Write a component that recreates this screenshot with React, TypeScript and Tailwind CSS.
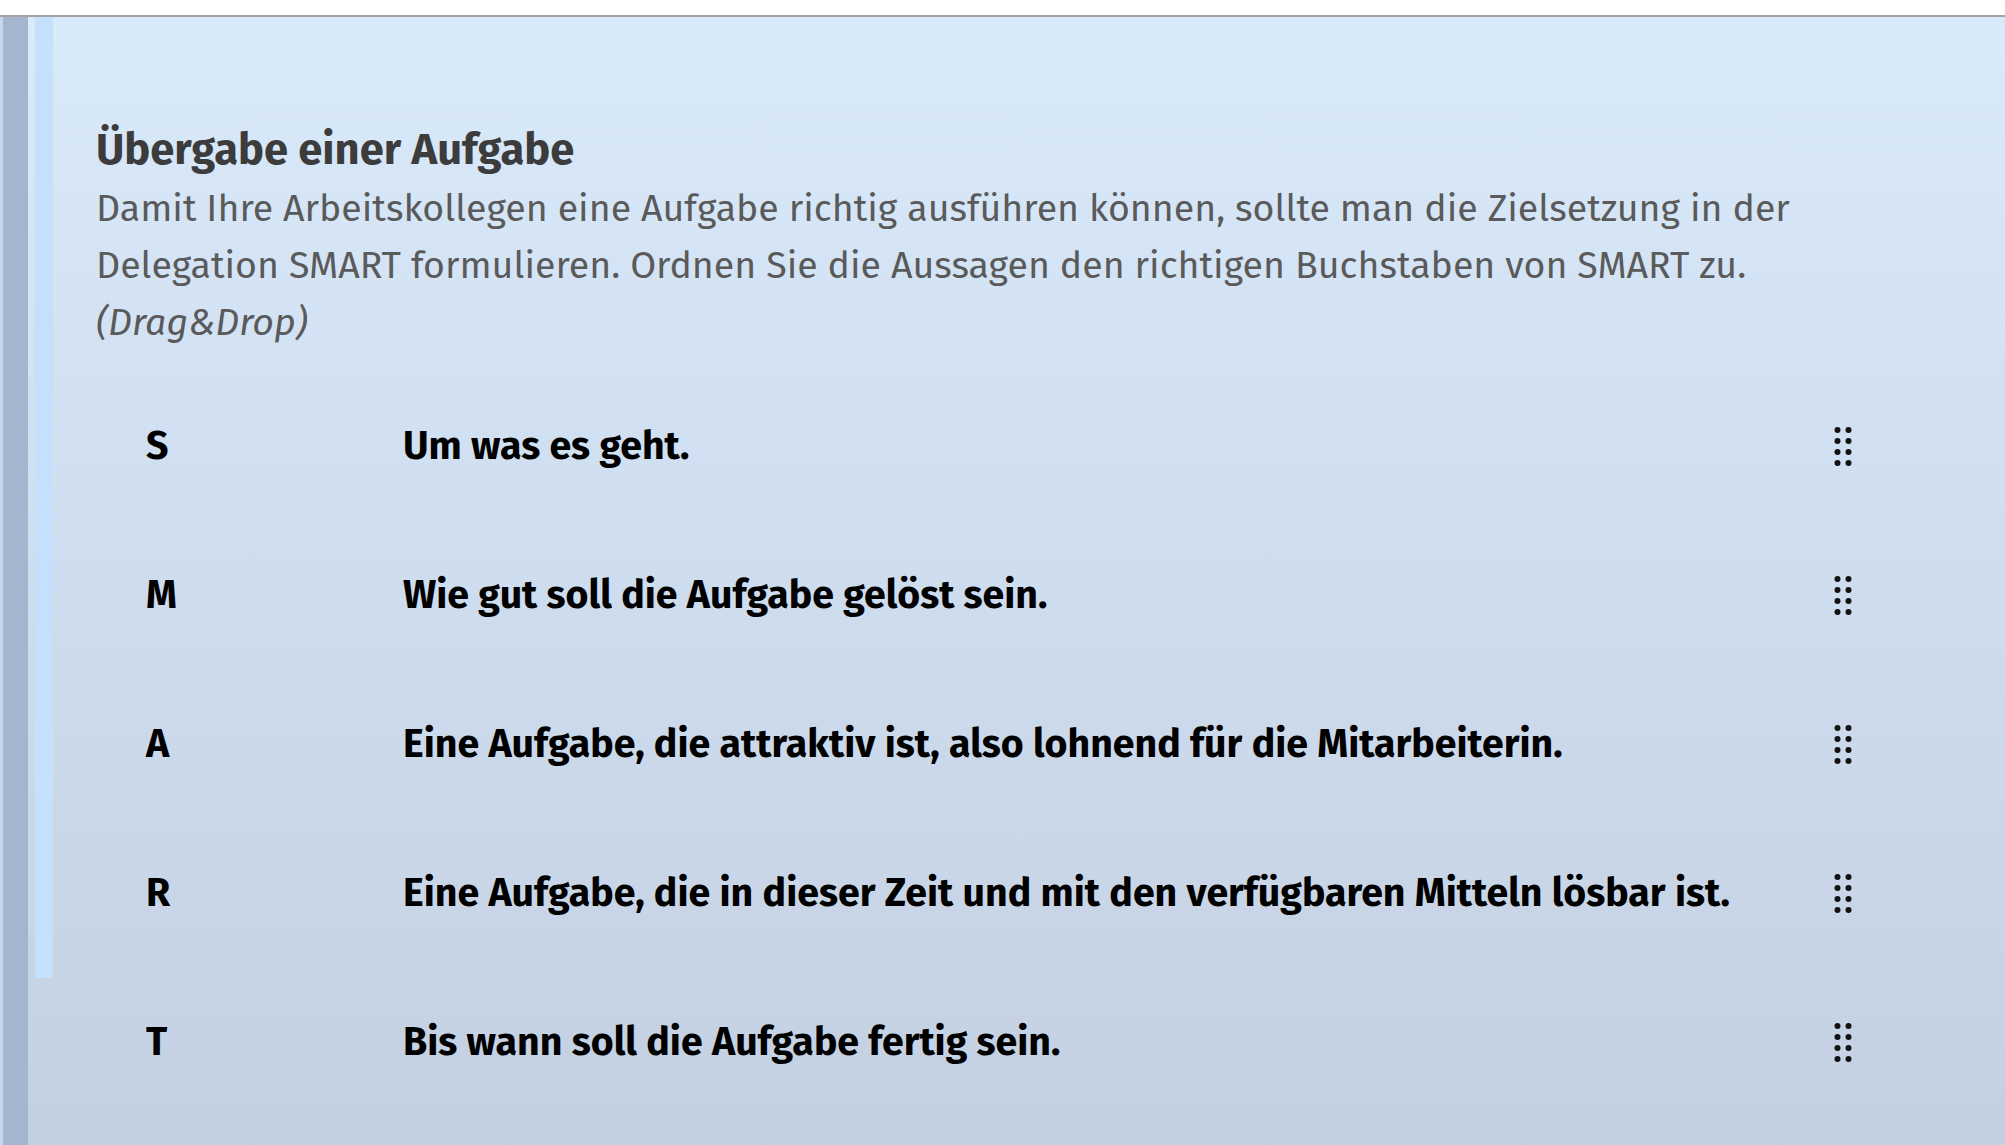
import React from "react";

const rows: [string, string][] = [
  ["S", "Um was es geht."],
  ["M", "Wie gut soll die Aufgabe gelöst sein."],
  ["A", "Eine Aufgabe, die attraktiv ist, also lohnend für die Mitarbeiterin."],
  ["R", "Eine Aufgabe, die in dieser Zeit und mit den verfügbaren Mitteln lösbar ist."],
  ["T", "Bis wann soll die Aufgabe fertig sein."],
];

function Handle() {
  const cy = [3, 14, 25, 36];
  return (
    <svg width="18" height="40" viewBox="0 0 18 40" aria-hidden="true">
      {cy.map((y) => (
        <g key={y}>
          <circle cx="3.5" cy={y} r="3" fill="#111" />
          <circle cx="14.5" cy={y} r="3" fill="#111" />
        </g>
      ))}
    </svg>
  );
}

export default function App() {
  return (
    <div
      className="w-[2005px] h-[1145px] overflow-hidden bg-white flex flex-col"
      style={{ fontFamily: "'Fira Sans', 'Open Sans', sans-serif" }}
    >
      <div className="h-[15px] shrink-0 bg-white" />
      <div className="h-[2px] shrink-0 bg-[#a3a3a3]" />
      <div className="flex-1 flex bg-gradient-to-b from-[#d9eafb] to-[#c3d0e2]">
        <div className="w-[3px] shrink-0 bg-[#c8d8ec]" />
        <div className="w-[25px] shrink-0 bg-[#a4b5ce]" />
        <div className="w-[7px] shrink-0" />
        <div className="w-[18px] shrink-0 h-[961px] bg-[#c5e0fc]" />
        <div className="flex-1 pl-[43px] pt-[104px]">
          <h1 className="text-[43.5px] leading-[57px] font-bold text-[#3c3c3c] mb-[2px]">
            Übergabe einer Aufgabe
          </h1>
          <p className="text-[37.5px] leading-[57px] text-[#5a5a5a] whitespace-nowrap">
            Damit Ihre Arbeitskollegen eine Aufgabe richtig ausführen können, sollte man die Zielsetzung in der
            <br />
            Delegation SMART formulieren. Ordnen Sie die Aussagen den richtigen Buchstaben von SMART zu.
            <br />
            <em>(Drag&amp;Drop)</em>
          </p>
          <div className="mt-[21px] flex flex-col">
            {rows.map(([l, t]) => (
              <div key={l} className="h-[149px] grid grid-cols-[257px_1fr_auto] items-center pl-[50px] pr-[153px]">
                <span className="text-[39.3px] font-bold text-black">{l}</span>
                <span className="text-[39.3px] font-bold text-black">{t}</span>
                <Handle />
              </div>
            ))}
          </div>
        </div>
      </div>
    </div>
  );
}
